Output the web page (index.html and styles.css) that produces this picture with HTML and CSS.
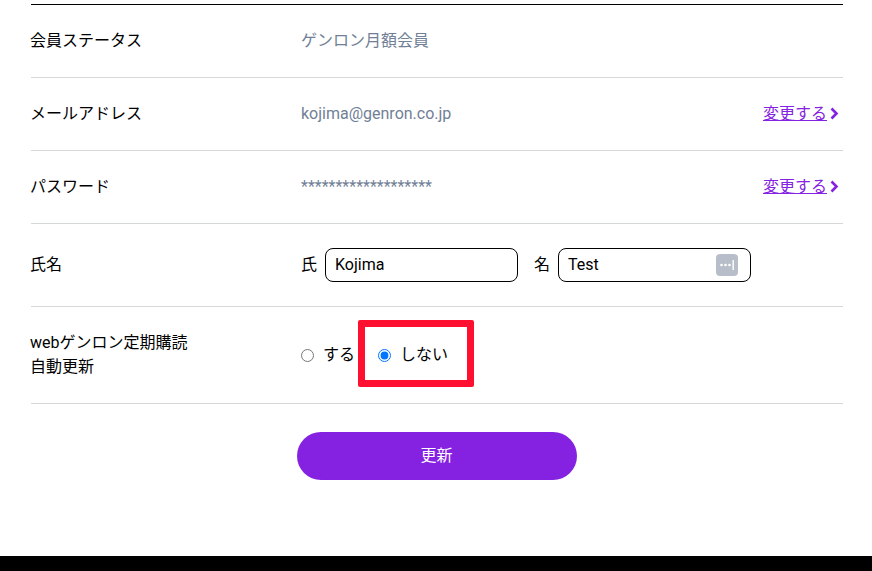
FILE: index.html
```html
<!DOCTYPE html>
<html lang="ja">
<head>
    <meta charset="UTF-8">
    <title>会員情報</title>
    <link rel="stylesheet" href="styles.css">
</head>
<body>

<div class="form-table">
    <div class="row row-status">
        <div class="row-label">会員ステータス</div>
        <div class="row-value">ゲンロン月額会員</div>
    </div>
    <div class="row">
        <div class="row-label">メールアドレス</div>
        <div class="row-value">kojima@genron.co.jp</div>
        <a class="change-link" href="#"><span>変更する</span>
            <svg class="chevron" viewBox="0 0 9 13"><path d="M1.5 1.5 L6.5 6.5 L1.5 11.5"/></svg>
        </a>
    </div>
    <div class="row">
        <div class="row-label">パスワード</div>
        <div class="row-value">*******************</div>
        <a class="change-link" href="#"><span>変更する</span>
            <svg class="chevron" viewBox="0 0 9 13"><path d="M1.5 1.5 L6.5 6.5 L1.5 11.5"/></svg>
        </a>
    </div>
    <div class="row row-name">
        <div class="row-label">氏名</div>
        <div class="name-fields">
            <label class="name-label">氏</label>
            <div class="text-input">Kojima</div>
            <label class="name-label name-label-second">名</label>
            <div class="text-input">Test
                <svg class="keychain" viewBox="0 0 22 22">
                    <rect width="22" height="22" rx="4" fill="#b8bec9"/>
                    <circle cx="5.5" cy="11" r="1.3" fill="#fff"/>
                    <circle cx="9.5" cy="11" r="1.3" fill="#fff"/>
                    <circle cx="13.5" cy="11" r="1.3" fill="#fff"/>
                    <rect x="16.5" y="6" width="1.4" height="10" fill="#fff"/>
                </svg>
            </div>
        </div>
    </div>
    <div class="row row-renew">
        <div class="row-label">webゲンロン定期購読<br>自動更新</div>
        <div class="radio-group">
            <label class="radio"><input type="radio" name="renew">する</label>
            <label class="radio"><input type="radio" name="renew" checked>しない</label>
            <div class="highlight"></div>
        </div>
    </div>
</div>

<div class="actions">
    <button class="submit-button">更新</button>
</div>

<div class="footer"></div>

</body>
</html>
```

FILE: styles.css
```css
* {
    box-sizing: border-box;
}
html, body {
    margin: 0;
    height: 571px;
    overflow: hidden;
}
body {
    display: flex;
    flex-direction: column;
    background: #fff;
    color: #000;
    font-family: Roboto, "Noto Sans CJK JP", sans-serif;
    font-size: 16px;
    line-height: 24px;
}
.form-table {
    margin: 4px 29px 0 31px;
    border-top: 1px solid #000;
}
.row {
    display: flex;
    align-items: center;
    height: 73px;
    border-bottom: 1px solid #d4d8d8;
}
.row-name {
    height: 83px;
}
.row-renew {
    height: 97px;
}
.row-label {
    width: 271px;
    margin-left: -1px;
}
.row-value {
    flex: 1;
    color: #718096;
}
.change-link {
    display: flex;
    align-items: center;
    gap: 3px;
    margin-right: 4px;
    color: #8522e2;
}
.chevron {
    width: 9px;
    height: 13px;
    margin-bottom: 2px;
}
.chevron path {
    fill: none;
    stroke: #8522e2;
    stroke-width: 2.6;
}
.name-fields {
    display: flex;
    align-items: center;
}
.name-label {
    margin-right: 8px;
}
.name-label-second {
    margin-left: 16px;
}
.text-input {
    display: flex;
    align-items: center;
    justify-content: space-between;
    width: 193px;
    height: 34px;
    padding: 0 12px 0 9px;
    border: 1px solid #000;
    border-radius: 8px;
}
.keychain {
    width: 22px;
    height: 22px;
}
.radio-group {
    position: relative;
    display: flex;
    align-items: center;
    gap: 23px;
}
.radio {
    display: flex;
    align-items: center;
}
.radio input {
    width: 13px;
    height: 13px;
    margin: 0 9px 0 0;
}
.highlight {
    position: absolute;
    left: 57px;
    top: -23px;
    width: 116px;
    height: 67px;
    border: 7px solid #ff0f30;
    border-radius: 2px;
}
.actions {
    display: flex;
    justify-content: center;
    margin: 28px 0 0 1px;
}
.submit-button {
    width: 280px;
    height: 48px;
    border: 0;
    border-radius: 24px;
    background: #8522e2;
    color: #fff;
    font-family: inherit;
    font-size: 16px;
    line-height: 24px;
}
.footer {
    margin-top: auto;
    height: 15px;
    background: #000;
}
```
